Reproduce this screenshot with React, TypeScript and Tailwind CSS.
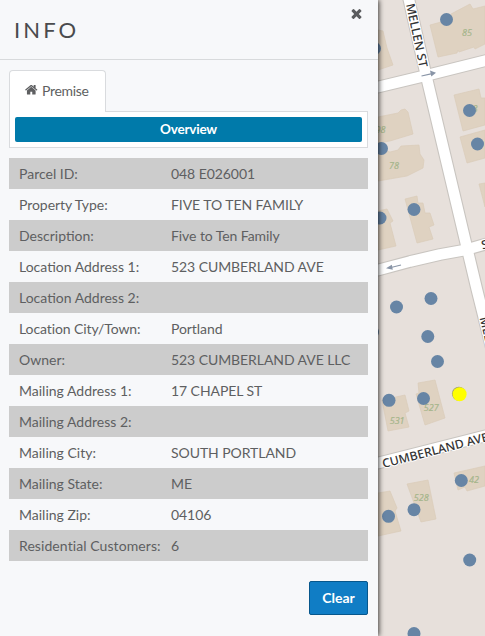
const rows = [
  ["Parcel ID:", "048 E026001"],
  ["Property Type:", "FIVE TO TEN FAMILY"],
  ["Description:", "Five to Ten Family"],
  ["Location Address 1:", "523 CUMBERLAND AVE"],
  ["Location Address 2:", ""],
  ["Location City/Town:", "Portland"],
  ["Owner:", "523 CUMBERLAND AVE LLC"],
  ["Mailing Address 1:", "17 CHAPEL ST"],
  ["Mailing Address 2:", ""],
  ["Mailing City:", "SOUTH PORTLAND"],
  ["Mailing State:", "ME"],
  ["Mailing Zip:", "04106"],
  ["Residential Customers:", "6"],
];

const labelTracking: Record<string, string> = {
  "Location City/Town:": "tracking-[-0.1px]",
  "Property Type:": "tracking-[-0.06px]",
  "Residential Customers:": "tracking-[0.08px]",
};

const buildings = [
  "378,30 383,31 387,48 393,65 378,70",
  "430,25 452,19 451,14 470,4 473,9 485,6 485,44 475,49 474,47 459,52 458,50 457,53 438,57",
  "378,117 398,113 401,110 405,109 408,112 413,134 390,141 378,143",
  "378,149 390,152 398,150 401,146 419,145 420,154 424,160 423,168 407,176 378,181",
  "454,95 479,89 481,98 485,98 485,125 463,131",
  "460,137 485,130 485,158 467,163",
  "479,184 485,183 485,207",
  "405,199 417,196 418,203 423,203 425,213 430,213 434,225 429,227 433,239 417,243",
  "378,211 387,209 393,221 390,223 396,246 378,250",
  "382,400 405,395 409,411 405,413 409,427 388,431",
  "418,383 435,380 445,418 425,425 416,394 419,393",
  "407,484 428,480 436,519 421,522",
  "378,493 390,491 397,508 395,511 401,531 378,536",
  "454,473 485,466 485,486 467,491 465,487 458,490",
];

const roads = [
  "370,89 378,87 426,75.5 500,57",
  "370,272 378,270 410,261.5 440,254.5 465,250 500,240",
  "366,466 378,463 485,436 500,432",
  "407,-8 409,0 426,75 467,248 477,290 492,350",
];

const dots = [
  [446.5, 19.5], [374.5, 48.5], [469.5, 110.5], [477.5, 144], [381.5, 148.5],
  [414, 209.5], [380, 218], [396.5, 307], [431, 298.5], [372.5, 332],
  [427.8, 336.5], [437.5, 361.5], [389, 400.3], [423.5, 398.5], [461.3, 480.5],
  [414, 509.7], [388.5, 516.3], [469.7, 560], [414, 633.5],
];

const numbers: [string, number, number][] = [
  ["85", 462, 35.7], ["98", 375.5, 133.3], ["78", 389, 168.7], ["8", 472.5, 112],
  ["531", 389.7, 423.7], ["527", 423.8, 410.7], ["528", 413.8, 500.7], ["42", 469, 482.5],
];

function HomeIcon() {
  return (
    <svg className="size-[13.5px]" viewBox="0 0 1792 1792" fill="currentColor">
      <path d="M1408 992v480q0 26-19 45t-45 19h-384v-384h-256v384h-384q-26 0-45-19t-19-45v-480q0-1 .5-3t.5-3l575-474 575 474q1 2 1 6zm223-69l-62 74q-8 9-21 11h-3q-13 0-21-7l-692-577-692 577q-12 8-24 7-13-2-21-11l-62-74q-8-10-7-23.5t11-21.5l719-599q32-26 76-26t76 26l244 204v-195q0-14 9-23t23-9h192q14 0 23 9t9 23v408l219 182q10 8 11 21.5t-7 23.5z" />
    </svg>
  );
}

function CloseIcon() {
  return (
    <svg className="size-[15px]" viewBox="0 0 1792 1792" fill="currentColor">
      <path d="M1490 1322q0 40-28 68l-136 136q-28 28-68 28t-68-28l-294-294-294 294q-28 28-68 28t-68-28l-136-136q-28-28-28-68t28-68l294-294-294-294q-28-28-28-68t28-68l136-136q28-28 68-28t68 28l294 294 294-294q28-28 68-28t68 28l136 136q28 28 28 68t-28 68l-294 294 294 294q28 28 28 68z" />
    </svg>
  );
}

function MapView() {
  return (
    <svg className="block h-[636px] w-[107px] shrink-0" viewBox="378 0 107 636">
      <rect x="378" width="107" height="636" fill="#e7e0db" />
      <g fill="#dfd2c1" stroke="#dacbb9" strokeWidth="0.7">
        {buildings.map((points) => <polygon key={points} points={points} />)}
      </g>
      <g fill="none" stroke="#c9c5c0" strokeWidth="12.8" strokeLinejoin="round">
        {roads.map((points) => <polyline key={points} points={points} />)}
      </g>
      <g fill="none" stroke="#fff" strokeWidth="10.6" strokeLinejoin="round">
        {roads.map((points) => <polyline key={points} points={points} />)}
      </g>
      <g fill="#8995a7" stroke="#8995a7" strokeWidth="1.2">
        <path d="M421.5 76 L431 73.8" />
        <path d="M430 70.6 L436 72.7 L431.3 76.5Z" stroke="none" />
        <path d="M401 265 L391 267.5" />
        <path d="M386 268.2 L391.8 264.7 L392.8 269.7Z" stroke="none" />
      </g>
      <g className="font-['Open_Sans',sans-serif] text-[9px] italic" fill="#a5b58b" stroke="#a5b58b" strokeWidth="0.2">
        {numbers.map(([label, x, y]) => <text key={label} x={x} y={y}>{label}</text>)}
      </g>
      <g
        className="font-['Noto_Sans',sans-serif] text-[12px] font-medium"
        fill="#343434" stroke="#fff" strokeWidth="2" paintOrder="stroke" strokeLinejoin="round"
      >
        <text transform="translate(406 4.5) rotate(78)" textLength="65" lengthAdjust="spacingAndGlyphs">MELLEN ST</text>
        <text transform="translate(383.5 468) rotate(-14.5)" textLength="109" lengthAdjust="spacingAndGlyphs">CUMBERLAND AVE</text>
        <text transform="translate(482.5 249.5) rotate(-14)">SHERMAN ST</text>
        <text transform="translate(479.5 318) rotate(76)">MELLEN ST</text>
      </g>
      <g fill="#6785a5">
        {dots.map(([x, y]) => <circle key={`${x}-${y}`} cx={x} cy={y} r="6.5" />)}
      </g>
      <circle cx="458.9" cy="393.7" r="7" fill="#9b9c77" />
      <circle cx="459.6" cy="394.2" r="7" fill="#ff0" />
    </svg>
  );
}

export default function App() {
  return (
    <div className="flex h-[636px] w-[485px] overflow-hidden bg-[#e7e0db] font-[Lato,sans-serif] text-[#5e5f61]">
      <aside className="relative z-10 h-full w-[378px] shrink-0 bg-[#f7f8fa] shadow-[1px_0_5px_rgba(0,0,0,0.75)]">
        <header className="flex h-[60px] justify-between border-b border-[#d8dadc] pl-[14px] pr-[14px]">
          <h1 className="pt-[15px] text-[22px] leading-[30px] font-normal tracking-[3.1px] text-[#4a4b4d]">INFO</h1>
          <button aria-label="Close" className="mt-[6px] h-[15px] text-[#5b5c5e]">
            <CloseIcon />
          </button>
        </header>
        <main className="px-[9px] pt-[10px] pr-[10px]">
          <div className="relative z-10 -mb-px flex h-[42px] w-[97px] items-center gap-[3.5px] rounded-t border border-b-0 border-[#d9dbde] bg-white pb-[3px] pl-[15px] text-[14px]">
            <HomeIcon />
            <span className="tracking-[-0.3px]">Premise</span>
          </div>
          <div className="border border-[#d9dbde] bg-white p-[5px]">
            <div className="h-[25px] rounded-[2px] bg-[#007aaa] text-center text-[13.5px] leading-[24px] font-bold tracking-[-0.2px] text-white">Overview</div>
          </div>
          <dl className="mt-[10px] text-[14px] leading-[31px]">
            {rows.map(([label, value]) => (
              <div key={label} className="flex h-[31px] pl-[10px] odd:bg-[#ccc]">
                <dt className={`w-[152px] whitespace-nowrap ${labelTracking[label] ?? ""}`}>{label}</dt>
                <dd className="tracking-[-0.07px] whitespace-nowrap">{value}</dd>
              </div>
            ))}
          </dl>
          <div className="mt-5 flex justify-end">
            <button className="h-[34px] w-[59px] rounded-[2px] border border-[#07578c] bg-[#107dc5] pb-[2px] text-[14px] font-bold text-white">Clear</button>
          </div>
        </main>
      </aside>
      <MapView />
    </div>
  );
}
